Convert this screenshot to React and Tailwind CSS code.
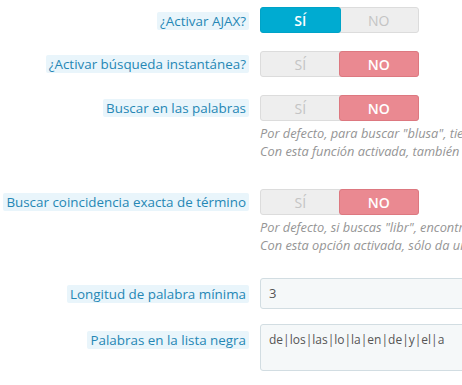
import React from "react";

function Label({ children, offset, extra = "" }) {
  return (
    <div className={"w-[249px] shrink-0 flex justify-end items-start " + offset}>
      <span className={"bg-[#e9f5fb] text-[#2587b5] px-[3px] rounded-[2px] text-[13.4px] leading-[18px] whitespace-nowrap " + extra}>
        {children}
      </span>
    </div>
  );
}

function Toggle({ on }) {
  return (
    <div className="flex w-[159px] h-[26px] rounded-[3px] bg-[#eeeeee] border border-[#dcdcdc] text-[14px] font-semibold">
      <div
        className={
          on
            ? "flex-1 flex items-center justify-center bg-[#00abd1] text-white rounded-[3px] -m-px border border-[#00a3c7]"
            : "flex-1 flex items-center justify-center text-[#c4c4c4] font-normal"
        }
      >
        SÍ
      </div>
      <div
        className={
          on
            ? "flex-1 flex items-center justify-center text-[#c4c4c4] font-normal"
            : "flex-1 flex items-center justify-center bg-[#ea8991] text-white rounded-[3px] -m-px border border-[#dd7880]"
        }
      >
        NO
      </div>
    </div>
  );
}

function Help({ lines }) {
  return (
    <div className="mt-[3px] text-[12.8px] leading-[18px] italic text-[#959595] whitespace-nowrap">
      {lines.map((l, i) => (
        <div key={i}>{l}</div>
      ))}
    </div>
  );
}

function Row({ className = "", children }) {
  return <div className={"flex items-start gap-[11px] " + className}>{children}</div>;
}

export default function App() {
  return (
    <div
      className="w-[462px] h-[385px] bg-white overflow-hidden pt-[7px]"
      style={{ fontFamily: "'Open Sans', sans-serif" }}
    >
      <Row>
        <Label offset="pt-[5px]">¿Activar AJAX?</Label>
        <div><Toggle on /></div>
      </Row>

      <Row className="mt-[18px]">
        <Label offset="pt-[4px]">¿Activar búsqueda instantánea?</Label>
        <div><Toggle /></div>
      </Row>

      <Row className="mt-[18px]">
        <Label offset="pt-[4px]">Buscar en las palabras</Label>
        <div className="min-w-0">
          <Toggle />
          <Help
            lines={[
              'Por defecto, para buscar "blusa", tienes que escribir "blusa".',
              'Con esta función activada, también coincide con "blu".',
            ]}
          />
        </div>
      </Row>

      <Row className="mt-[29px]">
        <Label offset="pt-[4px]">Buscar coincidencia exacta de término</Label>
        <div className="min-w-0">
          <Toggle />
          <Help
            lines={[
              'Por defecto, si buscas "libr", encontrarás "libro" y "librería".',
              "Con esta opción activada, sólo da un resultado exacto.",
            ]}
          />
        </div>
      </Row>

      <Row className="mt-[24px]">
        <Label offset="pt-[7px]">Longitud de palabra mínima</Label>
        <div className="min-w-0">
          <div className="h-[31px] w-[300px] bg-[#f5f8f9] border border-[#d2dde2] rounded-[3px] px-[8px] flex items-center text-[13px] text-[#555]">
            3
          </div>
        </div>
      </Row>

      <Row className="mt-[15px]">
        <Label offset="pt-[7px]">Palabras en la lista negra</Label>
        <div className="min-w-0">
          <div className="h-[47px] w-[300px] bg-[#f5f8f9] border border-[#d2dde2] rounded-[3px] px-[8px] pt-[6px] text-[12px] leading-[18px] text-[#555]">
            de|los|las|lo|la|en|de|y|el|a
          </div>
        </div>
      </Row>
    </div>
  );
}
